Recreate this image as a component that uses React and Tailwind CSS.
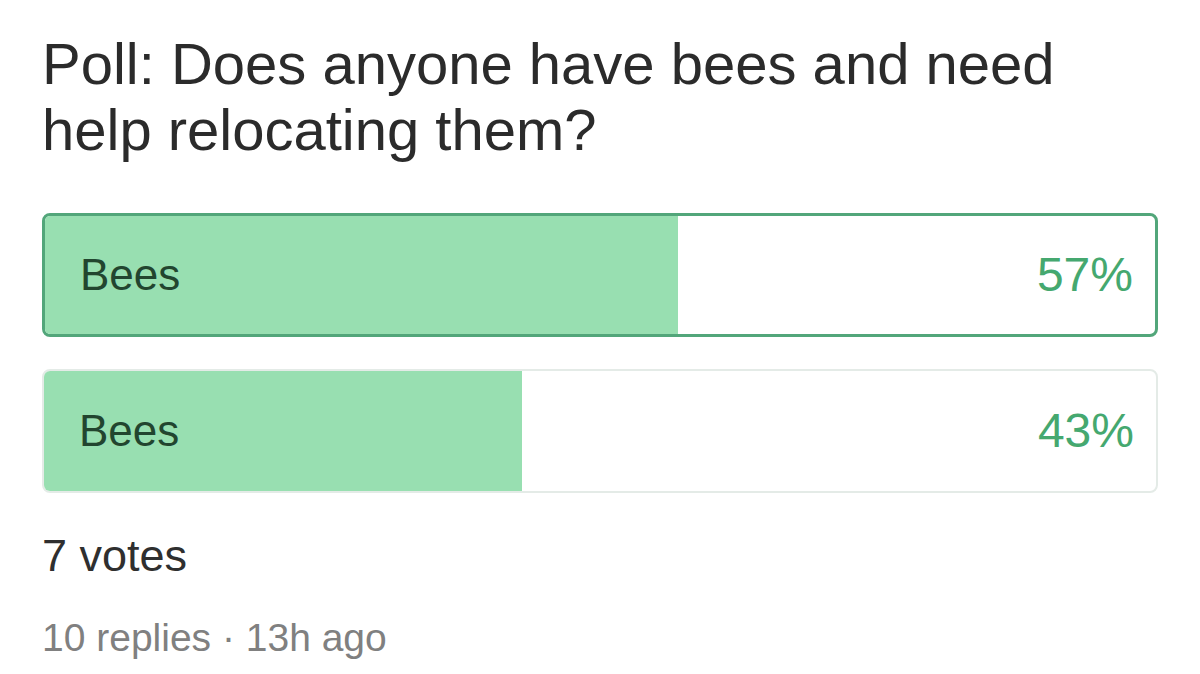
const options = [
  { label: 'Bees', pct: 57, selected: true },
  { label: 'Bees', pct: 43, selected: false },
]

function Option({ label, pct, selected }) {
  return (
    <div
      className={`relative h-[124px] rounded-[8px] overflow-hidden bg-white ${
        selected ? 'border-[3px] border-[#52a67a]' : 'border-2 border-[#e4ebe7]'
      }`}
    >
      <div className="absolute inset-y-0 left-0 bg-[#98dfb1]" style={{ width: `${pct}%` }} />
      <div className="relative h-full flex items-center justify-between pl-[35px] pr-[22px]">
        <span className="text-[44px] text-[#22452f]">{label}</span>
        <span className="text-[48px] text-[#45a86f]">{pct}%</span>
      </div>
    </div>
  )
}

export default function App() {
  return (
    <div className="w-[1200px] h-[674px] bg-white px-[42px] pt-[31px] font-['Liberation_Sans',Arial,sans-serif]">
      <h1 className="text-[58px] leading-[66px] text-[#2b2b2b]">
        Poll: Does anyone have bees and need
        <br />
        help relocating them?
      </h1>
      <div className="mt-[50px] flex flex-col gap-[32px]">
        {options.map((o, i) => (
          <Option key={i} {...o} />
        ))}
      </div>
      <div className="mt-[40px] text-[45px] leading-[46px] text-[#2f2f2f]">7 votes</div>
      <div className="mt-[39px] text-[39px] leading-[40px] text-[#808080]">10 replies · 13h ago</div>
    </div>
  )
}
